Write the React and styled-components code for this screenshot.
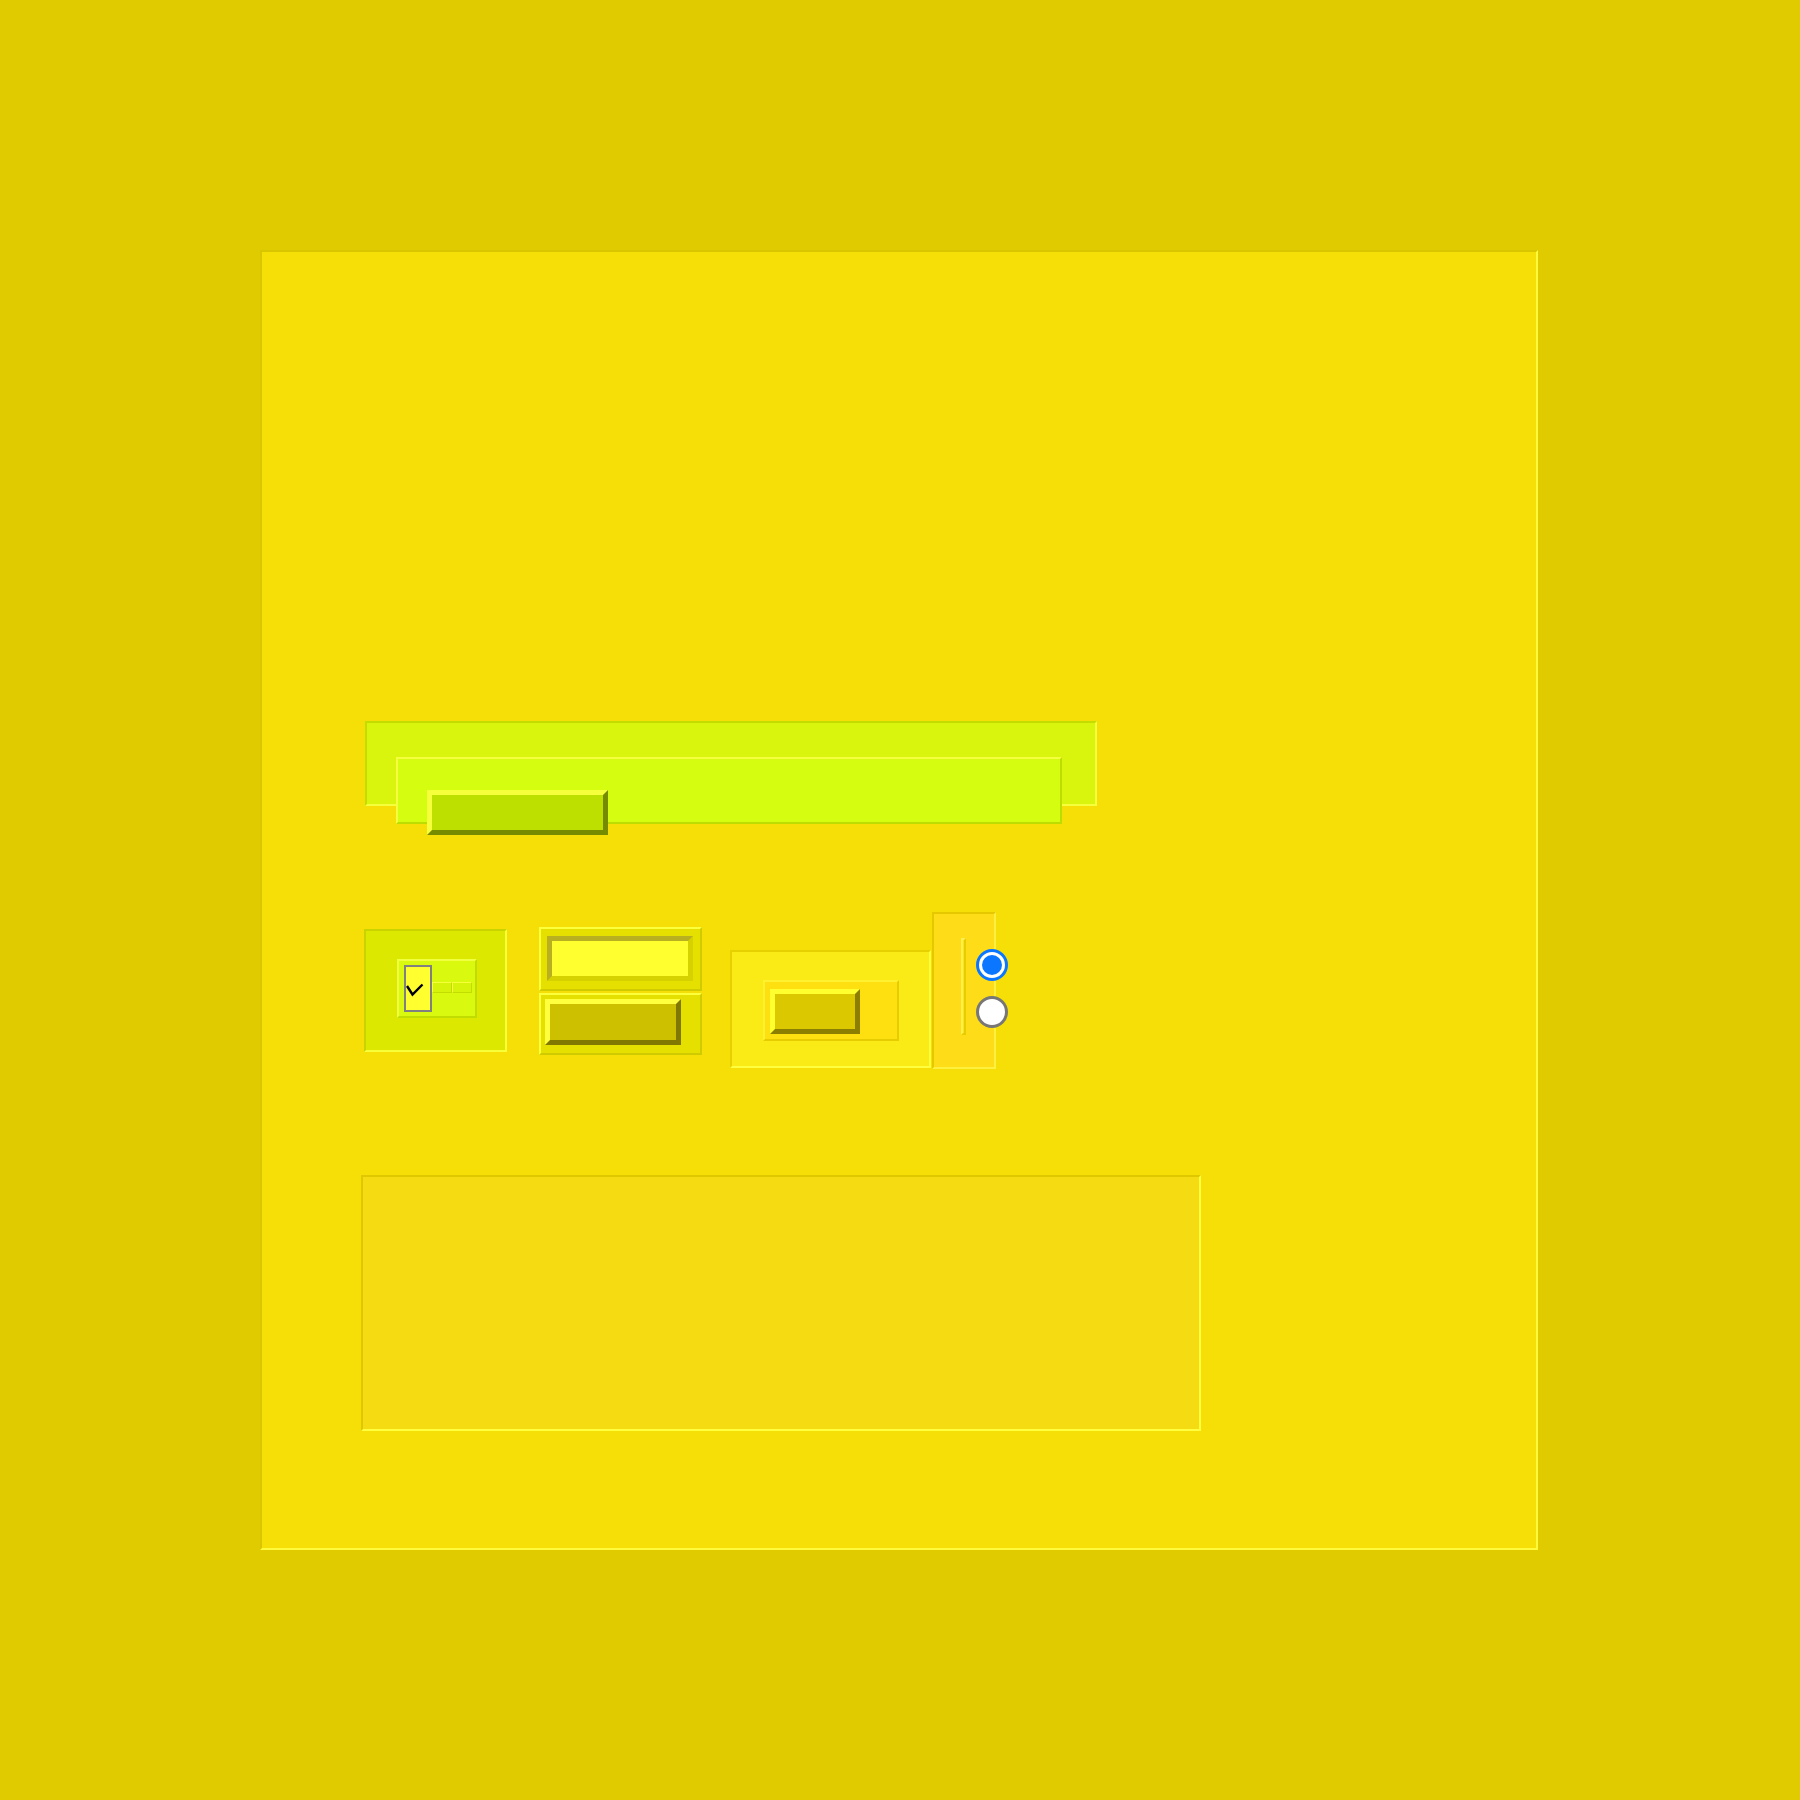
import React from "react";
import styled, { createGlobalStyle, css } from "styled-components";

const GlobalStyle = createGlobalStyle`
  *, *::before, *::after {
    box-sizing: border-box;
  }
  html, body {
    margin: 0;
    padding: 0;
    background: #dfcb00;
    font-family: "Liberation Sans", Arial, sans-serif;
  }
`;

// light edge on top/left, dark edge on bottom/right
const bevel = (tl, br, w = 2) => css`
  border: ${w}px solid;
  border-color: ${tl} ${br} ${br} ${tl};
`;

const Page = styled.div`
  min-height: 1800px;
  padding: 250px 0 0 260px;
`;

const Panel = styled.section`
  width: 1278px;
  height: 1300px;
  background: #f5df07;
  ${bevel("#d9c500", "#fffb3c")};
  padding: 469px 0 0 103px;
  display: flex;
  flex-direction: column;
  align-items: flex-start;
`;

const Track = styled.div`
  width: 732px;
  height: 85px;
  background: #d9f50e;
  ${bevel("#c4dc00", "#f6ff3c")};
  padding: 34px 0 0 29px;
`;

const Rail = styled.div`
  width: 666px;
  height: 67px;
  background: #d4fd10;
  ${bevel("#f5ff40", "#bddd00")};
  padding: 31px 0 0 29px;
`;

const Thumb = styled.div`
  width: 181px;
  height: 45px;
  background: #bde000;
  ${bevel("#f5ff3c", "#778b00", 5)};
`;

const Row = styled.div`
  display: flex;
  align-items: flex-start;
  margin-top: 106px;
`;

const CheckGroup = styled.div`
  width: 143px;
  height: 123px;
  margin: 17px 0 0 -1px;
  background: #dde800;
  ${bevel("#c8d300", "#f8ff38")};
  padding: 28px 0 0 31px;
`;

const CheckRow = styled.div`
  width: 80px;
  height: 59px;
  background: #d9f90e;
  ${bevel("#f0ff40", "#c0dc00")};
  padding: 4px 0 0 5px;
  display: flex;
  align-items: flex-start;
`;

const CheckBox = styled.span`
  width: 28px;
  height: 47px;
  background: #ffff30;
  border: 2px solid #808080;
  display: flex;
  align-items: center;

  svg {
    display: block;
    margin-top: 2px;
  }
`;

const Tick = styled.span`
  width: 20px;
  height: 11px;
  margin-top: 17px;
  background: #d6f40a;
  ${bevel("#f6ff3a", "#c2de00", 1)};
`;

const ButtonStack = styled.div`
  width: 163px;
  margin: 15px 0 0 32px;
  display: flex;
  flex-direction: column;
  gap: 2px;
`;

const ButtonSlot = styled.div`
  height: ${(p) => p.$h}px;
  background: #e6e000;
  ${bevel("#fbff3c", "#d0ca00")};
  padding: ${(p) => p.$pad};
`;

const Well = styled.div`
  width: 146px;
  height: 45px;
  background: #ffff30;
  ${bevel("#b8b020", "#d6d200", 5)};
`;

const PushButton = styled.div`
  width: ${(p) => p.$w}px;
  height: ${(p) => p.$h}px;
  background: ${(p) => p.$bg};
  ${(p) => bevel(p.$light, p.$dark, 5)};
`;

const SliderFrame = styled.div`
  width: 201px;
  height: 118px;
  margin: 38px 0 0 28px;
  background: #faeb17;
  ${bevel("#e6d000", "#ffff40")};
  padding: 28px 0 0 31px;
`;

const SliderInner = styled.div`
  width: 136px;
  height: 61px;
  background: #fedf10;
  ${bevel("#fff030", "#e6cc00")};
  padding: 7px 0 0 5px;
`;

const RadioColumn = styled.div`
  position: relative;
  width: 64px;
  height: 157px;
  margin-left: 1px;
  background: #fedc18;
  ${bevel("#e6c800", "#fff040")};
  padding: 24px 0 0 27px;
`;

const Divider = styled.div`
  width: 5px;
  height: 97px;
  background: #fde41a;
  ${bevel("#fff050", "#e6cc00")};
`;

const RadioStack = styled.div`
  position: absolute;
  left: 42px;
  top: 35px;
  display: flex;
  flex-direction: column;
  gap: 15px;
`;

const Radio = styled.span`
  position: relative;
  display: block;
  width: 32px;
  height: 32px;
  border-radius: 50%;
  background: #fff;
  border: 3px solid ${(p) => (p.$checked ? "#0b76ff" : "#777")};

  ${(p) =>
    p.$checked &&
    css`
      &::after {
        content: "";
        position: absolute;
        left: 3px;
        top: 3px;
        width: 20px;
        height: 20px;
        border-radius: 50%;
        background: #0b76ff;
      }
    `}
`;

const Tray = styled.div`
  width: 840px;
  height: 256px;
  margin: 106px 0 0 -4px;
  background: #f5dc12;
  ${bevel("#e0c800", "#ffff40")};
`;

const App = () => {
  return (
    <>
      <GlobalStyle />
      <Page>
        <Panel>
          <Track>
            <Rail>
              <Thumb />
            </Rail>
          </Track>

          <Row>
            <CheckGroup>
              <CheckRow>
                <CheckBox>
                  <svg width="18" height="14" viewBox="0 0 18 14">
                    <polyline
                      points="1,3 6.5,11.5 16.5,1.5"
                      fill="none"
                      stroke="#000"
                      strokeWidth="2.4"
                    />
                  </svg>
                </CheckBox>
                <Tick />
                <Tick />
              </CheckRow>
            </CheckGroup>

            <ButtonStack>
              <ButtonSlot $h={64} $pad="7px 0 0 6px">
                <Well />
              </ButtonSlot>
              <ButtonSlot $h={62} $pad="4px 0 0 4px">
                <PushButton
                  $w={136}
                  $h={46}
                  $bg="#ccc000"
                  $light="#ffff40"
                  $dark="#807800"
                />
              </ButtonSlot>
            </ButtonStack>

            <SliderFrame>
              <SliderInner>
                <PushButton
                  $w={90}
                  $h={45}
                  $bg="#dcc800"
                  $light="#ffff30"
                  $dark="#8c7e00"
                />
              </SliderInner>
            </SliderFrame>

            <RadioColumn>
              <Divider />
              <RadioStack>
                <Radio $checked />
                <Radio />
              </RadioStack>
            </RadioColumn>
          </Row>

          <Tray />
        </Panel>
      </Page>
    </>
  );
};

export default App;
